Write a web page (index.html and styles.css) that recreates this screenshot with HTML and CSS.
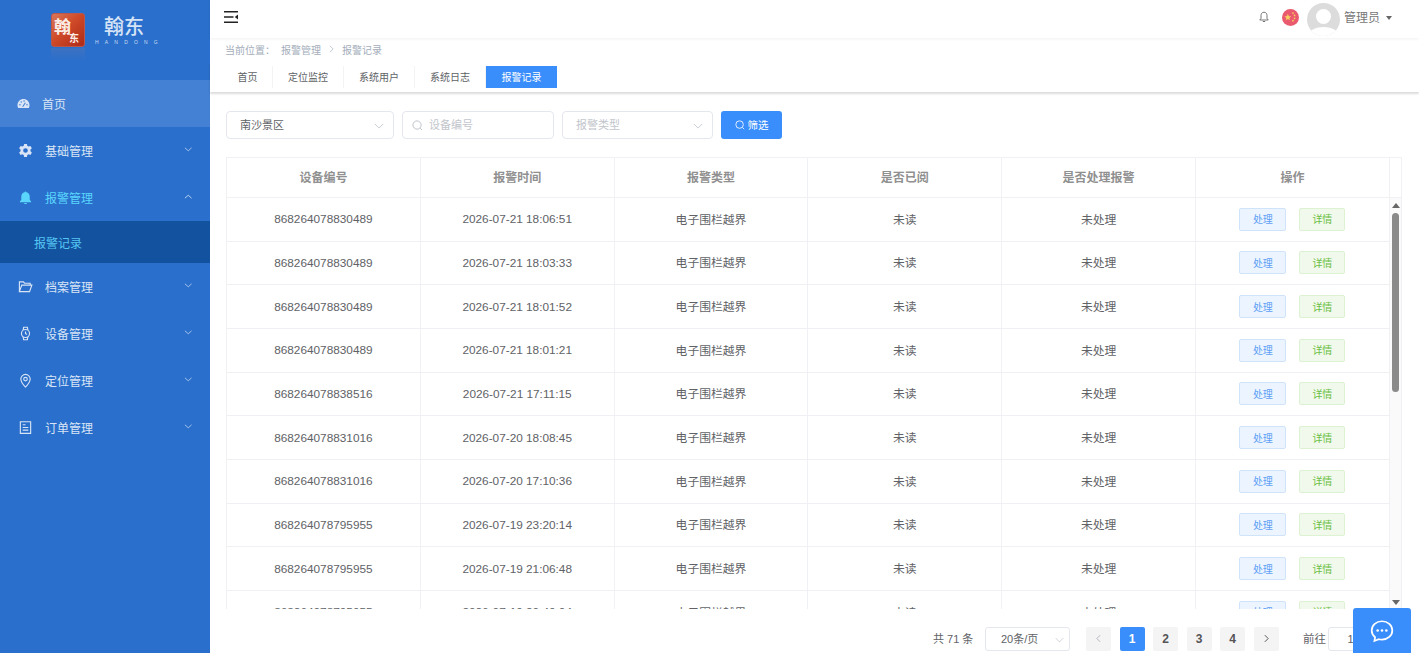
FILE: index.html
```html
<!DOCTYPE html>
<html lang="zh">
<head>
<meta charset="utf-8">
<title>报警记录</title>
<link rel="stylesheet" href="styles.css">
</head>
<body>
<div class="app">
  <aside class="sidebar">
    <div class="logo">
      <div class="logo-mark-wrap">
        <div class="logo-mark"><span class="glyph-a">翰</span><span class="glyph-b">东</span></div>
        <div class="logo-reflect"></div>
      </div>
      <div class="logo-text">
        <div class="logo-cn">翰东</div>
        <div class="logo-en">HANDONG</div>
      </div>
    </div>
    <nav class="menu">
      <div class="menu-item home">
        <svg class="ico home-ico" viewBox="0 0 16 16"><path fill="currentColor" d="M8 2.6C3.9 2.6.6 5.9.6 10c0 1.3.3 2.400.9 3.400h13c.6-1 .9-2.100.9-3.400 0-4.100-3.300-7.400-7.400-7.400z"/><circle cx="3.600" cy="9.500" r=".9" fill="#4480d3"/><circle cx="5.200" cy="6.200" r=".9" fill="#4480d3"/><circle cx="8.700" cy="4.900" r=".9" fill="#4480d3"/><circle cx="12.300" cy="9.500" r=".9" fill="#4480d3"/><path d="M7 12l3.300-5" stroke="#4480d3" stroke-width="1.300"/></svg>
        <span>首页</span>
      </div>
      <div class="menu-item">
        <svg class="ico" viewBox="0 0 16 16"><path fill="currentColor" fill-rule="evenodd" d="M6.500 1h3l.4 2 1.500.8 1.900-.7 1.500 2.600-1.500 1.300v1.900l1.500 1.300-1.500 2.600-1.900-.7-1.500.8-.4 2.100h-3l-.4-2.100-1.500-.8-1.900.7L1.200 10.200l1.500-1.300V7L1.200 5.700l1.500-2.600 1.900.7L6.100 3zM8 5.500a2.500 2.500 0 1 0 0 5 2.500 2.500 0 0 0 0-5z"/></svg>
        <span>基础管理</span>
        <svg class="chev" viewBox="0 0 10 6"><path d="M1 1l4 3.500L9 1" fill="none" stroke="currentColor"/></svg>
      </div>
      <div class="menu-item active">
        <svg class="ico" viewBox="0 0 16 16"><path fill="currentColor" d="M8 1.500c-.6 0-1 .4-1 .9C4.800 2.900 3.500 4.800 3.500 7v3.500L2 12.300v.7h12v-.7l-1.500-1.800V7c0-2.200-1.300-4.100-3.500-4.600 0-.5-.4-.9-1-.9zM6.300 13.800c.2.800.9 1.200 1.700 1.200s1.500-.4 1.700-1.200z"/></svg>
        <span>报警管理</span>
        <svg class="chev" viewBox="0 0 10 6"><path d="M1 5l4-3.500L9 5" fill="none" stroke="#d5e4f7"/></svg>
      </div>
      <div class="submenu">报警记录</div>
      <div class="menu-item">
        <svg class="ico" viewBox="0 0 16 16"><path fill="none" stroke="currentColor" stroke-width="1.200" d="M1.500 13.500V3h4.300l1.200 1.500h6v2M1.500 13.500h10.800l2.500-7H4z"/></svg>
        <span>档案管理</span>
        <svg class="chev" viewBox="0 0 10 6"><path d="M1 1l4 3.500L9 1" fill="none" stroke="currentColor"/></svg>
      </div>
      <div class="menu-item">
        <svg class="ico" viewBox="0 0 16 16"><g fill="none" stroke="currentColor" stroke-width="1.200"><circle cx="8" cy="8" r="4.300"/><path d="M5.500 4.300l.5-3h4l.5 3M5.500 11.700l.5 3h4l.5-3M8 5.800V8l1.500 1"/></g></svg>
        <span>设备管理</span>
        <svg class="chev" viewBox="0 0 10 6"><path d="M1 1l4 3.500L9 1" fill="none" stroke="currentColor"/></svg>
      </div>
      <div class="menu-item">
        <svg class="ico" viewBox="0 0 16 16"><g fill="none" stroke="currentColor" stroke-width="1.200"><path d="M8 15C5 12 3 9.500 3 6.500a5 5 0 0 1 10 0C13 9.500 11 12 8 15z"/><circle cx="8" cy="6.500" r="1.900"/></g></svg>
        <span>定位管理</span>
        <svg class="chev" viewBox="0 0 10 6"><path d="M1 1l4 3.500L9 1" fill="none" stroke="currentColor"/></svg>
      </div>
      <div class="menu-item">
        <svg class="ico" viewBox="0 0 16 16"><g fill="none" stroke="currentColor" stroke-width="1.200"><path d="M2.500 1.800h11v12.400h-11z"/><path d="M5 5h3M5 8h6M5 10.800h6"/></g></svg>
        <span>订单管理</span>
        <svg class="chev" viewBox="0 0 10 6"><path d="M1 1l4 3.500L9 1" fill="none" stroke="currentColor"/></svg>
      </div>
    </nav>
  </aside>

  <main class="main">
    <header class="topbar">
      <svg class="fold" viewBox="0 0 14 12"><path d="M0 .8h14M0 6h9.500M0 11.200h14" stroke="#222" stroke-width="1.400"/><path d="M14 3.500v5L10.800 6z" fill="#222"/></svg>
      <div class="top-right">
        <svg class="bell" viewBox="0 0 12 12"><path d="M6 1.200C4 1.200 3 2.800 3 4.600v2.800L1.800 9h8.400L9 7.400V4.600C9 2.800 8 1.200 6 1.200zM4.800 10.500h2.400" fill="none" stroke="#666" stroke-width=".9"/></svg>
        <div class="flag">
          <svg viewBox="0 0 16 16"><path fill="#f7d25f" d="M5.500 4.500l.9 2.300 2.400.1-1.900 1.500.7 2.300-2.100-1.300-2 1.300.6-2.300L2.200 6.900l2.400-.1z"/><circle cx="10.300" cy="3.800" r=".8" fill="#f7d25f"/><circle cx="11.800" cy="6" r=".8" fill="#f7d25f"/><circle cx="11.800" cy="8.800" r=".8" fill="#f7d25f"/><circle cx="10.300" cy="11" r=".8" fill="#f7d25f"/></svg>
        </div>
        <div class="avatar"><span class="avatar-head"></span><span class="avatar-body"></span></div>
        <span class="user">管理员</span>
        <span class="caret"></span>
      </div>
    </header>

    <div class="crumbs">
      <span class="crumb-label">当前位置：</span>
      <span>报警管理</span>
      <svg class="crumb-sep" viewBox="0 0 6 10"><path d="M1 1l4 4-4 4" fill="none" stroke="#b5bdc9"/></svg>
      <span>报警记录</span>
    </div>

    <div class="tabs">
      <span class="tab">首页</span>
      <span class="tab">定位监控</span>
      <span class="tab">系统用户</span>
      <span class="tab">系统日志</span>
      <span class="tab current">报警记录</span>
    </div>

    <section class="content">
      <div class="filters">
        <div class="field f-area"><span class="val">南沙景区</span><svg class="sel-chev" viewBox="0 0 12 7"><path d="M1 1l5 5 5-5" fill="none" stroke="#c0c4cc"/></svg></div>
        <div class="field f-search"><svg class="search" viewBox="0 0 12 12"><circle cx="5.500" cy="5.500" r="4.500" fill="none" stroke="#b9bdc5"/><path d="M9 9l2 2" stroke="#b9bdc5"/></svg><span class="ph">设备编号</span></div>
        <div class="field f-type"><span class="ph">报警类型</span><svg class="sel-chev" viewBox="0 0 12 7"><path d="M1 1l5 5 5-5" fill="none" stroke="#c0c4cc"/></svg></div>
        <button class="btn-filter"><svg class="search-w" viewBox="0 0 12 12"><circle cx="5.500" cy="5.500" r="4.500" fill="none" stroke="#fff"/><path d="M9 9l2 2" stroke="#fff"/></svg>筛选</button>
      </div>

      <div class="table">
        <div class="t-head">
          <div class="th">设备编号</div>
          <div class="th">报警时间</div>
          <div class="th">报警类型</div>
          <div class="th">是否已阅</div>
          <div class="th">是否处理报警</div>
          <div class="th">操作</div>
          <div class="th-gutter"></div>
        </div>
        <div class="t-frame">
          <div class="t-body">
            <div class="tr"><div class="td">868264078830489</div><div class="td">2026-07-21 18:06:51</div><div class="td">电子围栏越界</div><div class="td">未读</div><div class="td">未处理</div><div class="td ops"><span class="tag blue">处理</span><span class="tag green">详情</span></div></div>
            <div class="tr"><div class="td">868264078830489</div><div class="td">2026-07-21 18:03:33</div><div class="td">电子围栏越界</div><div class="td">未读</div><div class="td">未处理</div><div class="td ops"><span class="tag blue">处理</span><span class="tag green">详情</span></div></div>
            <div class="tr"><div class="td">868264078830489</div><div class="td">2026-07-21 18:01:52</div><div class="td">电子围栏越界</div><div class="td">未读</div><div class="td">未处理</div><div class="td ops"><span class="tag blue">处理</span><span class="tag green">详情</span></div></div>
            <div class="tr"><div class="td">868264078830489</div><div class="td">2026-07-21 18:01:21</div><div class="td">电子围栏越界</div><div class="td">未读</div><div class="td">未处理</div><div class="td ops"><span class="tag blue">处理</span><span class="tag green">详情</span></div></div>
            <div class="tr"><div class="td">868264078838516</div><div class="td">2026-07-21 17:11:15</div><div class="td">电子围栏越界</div><div class="td">未读</div><div class="td">未处理</div><div class="td ops"><span class="tag blue">处理</span><span class="tag green">详情</span></div></div>
            <div class="tr"><div class="td">868264078831016</div><div class="td">2026-07-20 18:08:45</div><div class="td">电子围栏越界</div><div class="td">未读</div><div class="td">未处理</div><div class="td ops"><span class="tag blue">处理</span><span class="tag green">详情</span></div></div>
            <div class="tr"><div class="td">868264078831016</div><div class="td">2026-07-20 17:10:36</div><div class="td">电子围栏越界</div><div class="td">未读</div><div class="td">未处理</div><div class="td ops"><span class="tag blue">处理</span><span class="tag green">详情</span></div></div>
            <div class="tr"><div class="td">868264078795955</div><div class="td">2026-07-19 23:20:14</div><div class="td">电子围栏越界</div><div class="td">未读</div><div class="td">未处理</div><div class="td ops"><span class="tag blue">处理</span><span class="tag green">详情</span></div></div>
            <div class="tr"><div class="td">868264078795955</div><div class="td">2026-07-19 21:06:48</div><div class="td">电子围栏越界</div><div class="td">未读</div><div class="td">未处理</div><div class="td ops"><span class="tag blue">处理</span><span class="tag green">详情</span></div></div>
            <div class="tr"><div class="td">868264078795955</div><div class="td">2026-07-19 20:40:04</div><div class="td">电子围栏越界</div><div class="td">未读</div><div class="td">未处理</div><div class="td ops"><span class="tag blue">处理</span><span class="tag green">详情</span></div></div>
          </div>
          <div class="scrollbar">
            <span class="arrow-up"></span>
            <span class="thumb"></span>
            <span class="arrow-down"></span>
          </div>
        </div>
      </div>

      <div class="pager">
        <span class="total">共 71 条</span>
        <div class="size">20条/页<svg class="size-chev" viewBox="0 0 12 7"><path d="M1 1l5 5 5-5" fill="none" stroke="#c0c4cc"/></svg></div>
        <span class="pg nav"><svg viewBox="0 0 6 10"><path d="M5 1L1 5l4 4" fill="none" stroke="#b4b7bd" stroke-width="1.200"/></svg></span>
        <span class="pg on">1</span>
        <span class="pg">2</span>
        <span class="pg">3</span>
        <span class="pg">4</span>
        <span class="pg nav"><svg viewBox="0 0 6 10"><path d="M1 1l4 4-4 4" fill="none" stroke="#555" stroke-width="1.200"/></svg></span>
        <span class="goto">前往</span>
        <span class="goto-input">1</span>
      </div>
    </section>
  </main>
</div>
<div class="chat">
  <svg viewBox="0 0 24 24"><path d="M12 3c-5.300 0-9.500 3.800-9.500 8.500 0 2.500 1.200 4.700 3.100 6.300L5 21.200l4.100-1.600c.9.300 1.900.4 2.900.4 5.300 0 9.500-3.800 9.500-8.500S17.300 3 12 3z" fill="none" stroke="#fff" stroke-width="1.600"/><circle cx="8" cy="11.500" r="1.200" fill="#fff"/><circle cx="12" cy="11.500" r="1.200" fill="#fff"/><circle cx="16" cy="11.500" r="1.200" fill="#fff"/></svg>
</div>
</body>
</html>
```

FILE: styles.css
```css
* { box-sizing: border-box; }
html, body { margin: 0; height: 100%; overflow: hidden; }
body {
  font-family: "Liberation Sans", "Noto Sans CJK SC", sans-serif;
  font-size: 12px;
  color: #606266;
  background: #fff;
}
.app { display: flex; height: 653px; }

/* sidebar */
.sidebar { width: 210px; flex: none; background: #2a6fcb; color: #d9e5f6; }
.logo { height: 80px; display: flex; padding: 13px 0 0 51px; gap: 10px; }
.logo-mark-wrap { width: 34px; }
.logo-mark {
  width: 34px; height: 34px; border-radius: 3px;
  background: linear-gradient(135deg, #d8775a 0%, #cf4a28 45%, #ad2a18 100%);
  border: 1px solid #b9574a;
  color: #fbeee6; font-family: "Noto Sans CJK SC", sans-serif; font-weight: 700;
  display: flex; align-items: flex-start; padding: 2px 0 0 2px; overflow: hidden;
}
.glyph-a { font-size: 17px; line-height: 20px; }
.glyph-b { font-size: 10px; line-height: 12px; margin-top: 16px; margin-left: -2px; }
.logo-reflect { height: 13px; margin-top: 1px; background: linear-gradient(#4f74b8, #2a6fcb); opacity: .5; }
.logo-text { width: 64px; text-align: center; }
.logo-cn { font: 500 20px/26px "Noto Sans CJK SC", sans-serif; color: #d5e3f6; margin-right: 6px; }
.logo-en { font-size: 5px; line-height: 6px; letter-spacing: 6.200px; color: #c9dcf4; white-space: nowrap; }

.menu-item {
  height: 47px; display: flex; align-items: center;
  padding-left: 18px; position: relative;
}
.menu-item .ico { width: 15px; height: 15px; margin-right: 12px; flex: none; }
.menu-item .chev { position: absolute; right: 18px; top: 20px; width: 8.500px; height: 5px; color: #b9d0ef; }
.menu-item.home { background: #4480d3; padding-left: 17px; }
.menu-item.home .home-ico { width: 13px; height: 13px; margin-right: 12px; }
.menu-item.active { color: #5ad6fd; }
.submenu {
  height: 42px; background: #12529f; color: #56c6f2;
  display: flex; align-items: center; padding-left: 34px;
}

/* main */
.main { flex: 1; min-width: 0; display: flex; flex-direction: column; }
.topbar {
  height: 38px; flex: none; display: flex; align-items: center; justify-content: space-between;
  padding: 0 27px 4px 14px; box-shadow: 0 1px 3px rgba(0,0,0,.06); position: relative;
}
.fold { width: 14px; height: 12px; }
.top-right { display: flex; align-items: center; }
.bell { width: 12px; height: 12px; }
.flag { width: 17px; height: 17px; border-radius: 50%; background: #ea5a6f; margin-left: 12px; overflow: hidden; display: flex; }
.flag svg { width: 17px; height: 17px; }
.avatar {
  width: 33px; height: 33px; border-radius: 50%; background: #dcdcdc; margin: 5px 0 0 8px;
  position: relative; overflow: hidden;
}
.avatar-head { position: absolute; left: 9px; top: 6px; width: 15px; height: 15px; border-radius: 50%; background: #fff; }
.avatar-body { position: absolute; left: 0; top: 24px; width: 33px; height: 20px; border-radius: 50%; background: #fff; }
.user { margin-left: 4px; color: #777; padding-bottom: 2px; }
.caret { margin-left: 6px; border: 3.500px solid transparent; border-top: 4px solid #666; border-bottom: 0; margin-top: 2px; }

.crumbs {
  height: 24px; flex: none; display: flex; align-items: center; padding: 0 15px 2px;
  font-size: 10px; color: #a4adba;
}
.crumb-label { width: 56px; }
.crumb-sep { width: 5px; height: 8px; margin: 0 8px; }

.tabs {
  height: 30px; flex: none; display: flex; padding: 4px 0 0 7px; align-items: flex-start;
  box-shadow: 0 2px 2px rgba(0,0,0,.14); position: relative;
  font-size: 10px;
}
.tab { height: 22px; width: 71px; display: flex; align-items: center; justify-content: center; color: #606266; background: #fff; border-right: 1px solid #f3f3f3; padding-bottom: 1px; }
.tab:nth-child(1) { width: 56px; padding-left: 6px; }
.tab.current { background: #3a8efc; color: #fff; border: 0; }

.content { flex: 1; min-height: 0; padding: 19px 17px 0 16px; }
.filters { display: flex; height: 28px; align-items: stretch; font-size: 11px; }
.field {
  border: 1px solid #e4e7ed; border-radius: 4px; display: flex; align-items: center;
  padding: 0 13px 3px; position: relative;
}
.f-area { width: 168px; margin-right: 8px; }
.f-search { width: 152px; margin-right: 8px; padding-left: 9px; padding-bottom: 3px; }
.f-type { width: 151px; margin-right: 8px; }
.val { color: #606266; }
.ph { color: #c2c5cc; }
.sel-chev { position: absolute; right: 9px; top: 11px; width: 10px; height: 6px; }
.search { width: 11px; height: 11px; margin: 3px 6px 0 0; }
.btn-filter {
  width: 61px; border: 0; border-radius: 3px; background: #3a8efc; color: #fff;
  font: 10.500px "Liberation Sans", "Noto Sans CJK SC", sans-serif; display: flex; align-items: center; justify-content: center; padding: 0 0 2px;
}
.search-w { width: 10px; height: 10px; margin: 2px 3px 0 0; }

.table { margin-top: 18px; border: 1px solid #f0f1f4; border-bottom: 0; }
.t-head { display: flex; height: 40px; border-bottom: 1px solid #f0f1f4; }
.th {
  width: 193.800px; flex: none; display: flex; align-items: center; justify-content: center;
  font-weight: bold; color: #909090; border-right: 1px solid #f0f1f4; padding-bottom: 2px;
}
.th-gutter { flex: 1; }
.t-frame { display: flex; height: 411px; }
.t-body { width: 1163px; flex: none; overflow: hidden; }
.tr { display: flex; height: 43.670px; border-bottom: 1px solid #eff0f3; }
.td {
  width: 193.800px; flex: none; display: flex; align-items: center; justify-content: center;
  border-right: 1px solid #f0f1f4; color: #606266; font-size: 11.800px;
}
.td:nth-child(n+3) { padding-bottom: 2px; }
.td.ops { gap: 13px; font-size: 10px; padding: 0; }
.tag { width: 47px; height: 23px; border-radius: 2px; display: flex; align-items: center; justify-content: center; border: 1px solid; padding-bottom: 1px; }
.tag.blue { background: #ecf5ff; border-color: #cfe3fb; color: #5f9ff5; }
.tag.green { background: #f0f9eb; border-color: #dcf2d0; color: #6dbf45; width: 46px; }

.scrollbar { flex: 1; background: #fafafa; position: relative; display: flex; flex-direction: column; align-items: center; padding-top: 5px; }
.arrow-up { border: 4px solid transparent; border-bottom: 5px solid #666; border-top: 0; }
.thumb { width: 7px; height: 179px; margin-top: 5px; border-radius: 4px; background: #8a8a8a; }
.arrow-down { position: absolute; top: 402px; border: 4px solid transparent; border-top: 5px solid #666; border-bottom: 0; }

.pager { display: flex; align-items: center; height: 45px; position: relative; padding-left: 707px; padding-top: 14px; white-space: nowrap; font-size: 11px; }
.total { width: 52px; padding-bottom: 2px; }
.size {
  width: 85px; height: 24px; border: 1px solid #e4e7ed; border-radius: 3px; margin-right: 16px;
  display: flex; align-items: center; padding: 0 0 2px 15px; position: relative;
}
.size-chev { position: absolute; right: 5px; top: 9px; width: 9px; height: 6px; }
.pg {
  width: 25px; height: 24px; background: #f4f4f5; border-radius: 2px; margin-right: 8.500px;
  display: flex; align-items: center; justify-content: center; font-weight: bold; font-size: 12px; color: #555; flex: none;
}
.pg svg { width: 5px; height: 9px; }
.pg.on { background: #3a8efc; color: #fff; }
.goto { margin-left: 16px; padding-bottom: 2px; font-size: 11.500px; }
.goto-input {
  width: 45px; height: 24px; border: 1px solid #e4e7ed; border-radius: 3px; margin-left: 2px;
  display: flex; align-items: center; justify-content: center; flex: none; margin-right: -40px;
}

.chat {
  position: fixed; left: 1353px; top: 608px; width: 58px; height: 45px;
  background: #3a8efc; border-radius: 3px 3px 0 0; display: flex; align-items: center; justify-content: center;
}
.chat svg { width: 26px; height: 26px; }
```
